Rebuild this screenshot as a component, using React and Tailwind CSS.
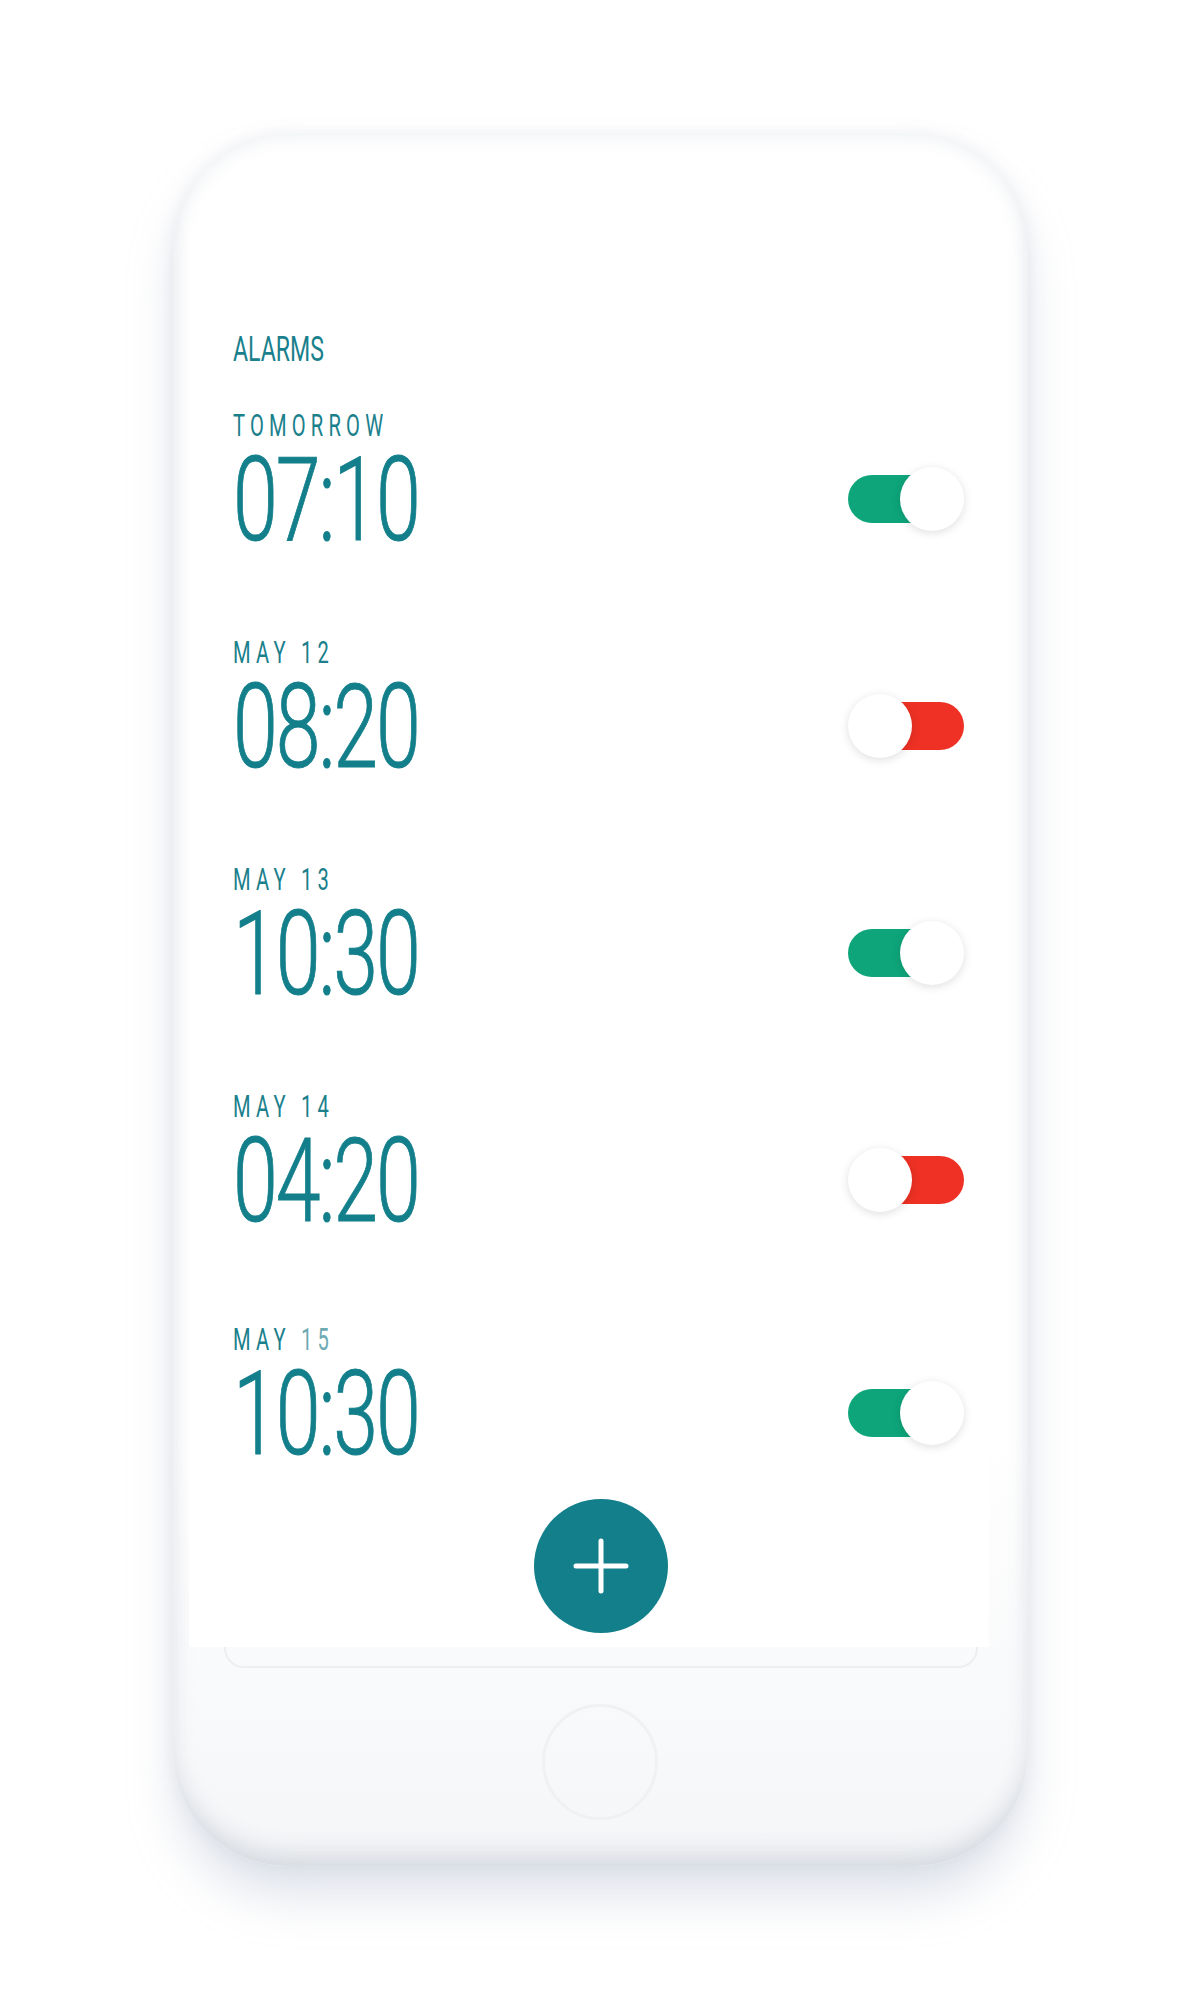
import React from 'react';

const alarms = [
  { id: 1, label: 'TOMORROW', time: '07:10', on: true },
  { id: 2, label: 'MAY 12', time: '08:20', on: false },
  { id: 3, label: 'MAY 13', time: '10:30', on: true },
  { id: 4, label: 'MAY 14', time: '04:20', on: false },
  { id: 5, label: 'MAY', faded: '15', time: '10:30', on: true },
];

// Switch: track sits under the knob, knob side flips with state
const Toggle = ({ on }) => (
  <div className="relative w-[116px] h-[64px] mb-[3px] shrink-0">
    <div
      className={
        on
          ? 'absolute top-[8px] left-0 w-[86px] h-[48px] rounded-full bg-[#0ea57a]'
          : 'absolute top-[8px] right-0 w-[86px] h-[48px] rounded-full bg-[#ee3124]'
      }
    />
    <div
      className={
        on
          ? 'absolute top-0 right-0 w-[64px] h-[64px] rounded-full bg-white shadow-[0_2px_10px_rgba(0,0,0,0.13)]'
          : 'absolute top-0 left-0 w-[64px] h-[64px] rounded-full bg-white shadow-[0_2px_10px_rgba(0,0,0,0.13)]'
      }
    />
  </div>
);

const AlarmRow = ({ alarm, last }) => (
  <div className={last ? 'flex flex-col mt-[6px]' : 'flex flex-col'}>
    <p className="h-[31px] text-[31px] leading-none text-[#1a808c] font-['Roboto',sans-serif] origin-left scale-x-[0.65] tracking-[8px] whitespace-nowrap">
      {alarm.label}
      {alarm.faded && <span className="text-[#6eaab2]"> {alarm.faded}</span>}
    </p>
    <div className="mt-[1px] flex items-center justify-between">
      <p className="h-[117px] text-[117px] leading-none font-light text-[#137f8b] [-webkit-text-stroke:1px_#137f8b] font-['Roboto',sans-serif] origin-left scale-x-[0.69] tracking-[-3px] whitespace-nowrap">
        {alarm.time}
      </p>
      <Toggle on={alarm.on} />
    </div>
  </div>
);

export default function App() {
  return (
    <div className="min-h-[2000px] bg-white pt-[133px]">
      <div className="mx-auto w-[855px] h-[1733px] rounded-[115px] bg-linear-to-b from-white from-75% to-[#f5f6f8] flex flex-col shadow-[0_34px_50px_-6px_rgba(170,180,200,0.4),0_0_16px_rgba(205,210,220,0.3),inset_0_-22px_26px_-12px_rgba(200,204,212,0.65),inset_0_0_22px_rgba(228,231,236,0.8)]">
        {/* screen */}
        <div className="ml-[16px] mr-[39px] mt-[100px] h-[1414px] shrink-0 bg-white flex flex-col">
          <div className="pl-[44px] pr-[25px] flex flex-col">
            <p className="mt-[99px] h-[35px] text-[35px] leading-none text-[#1a808c] font-['Roboto',sans-serif] origin-left scale-x-[0.66] whitespace-nowrap">
              ALARMS
            </p>
            <div className="mt-[43px] flex flex-col gap-[78px]">
              {alarms.map((a, i) => (
                <AlarmRow key={a.id} alarm={a} last={i === alarms.length - 1} />
              ))}
            </div>
          </div>
          <div className="mt-[26px] pl-[24px] flex justify-center">
            <button className="w-[134px] h-[134px] rounded-full bg-[#137f8a] flex items-center justify-center">
              <svg width="56" height="56" viewBox="0 0 56 56" fill="none" stroke="white" strokeWidth="5" strokeLinecap="round">
                <path d="M28 3v50M3 28h50" />
              </svg>
            </button>
          </div>
        </div>
        {/* lower bezel outline */}
        <div className="ml-[51px] mr-[50px] h-[21px] shrink-0 border-x-2 border-b-2 border-[#eceef1] rounded-b-[20px]" />
        {/* home button */}
        <div className="mt-[36px] mx-auto w-[116px] h-[116px] shrink-0 rounded-full border-[3px] border-[#eff1f3]" />
      </div>
    </div>
  );
}
